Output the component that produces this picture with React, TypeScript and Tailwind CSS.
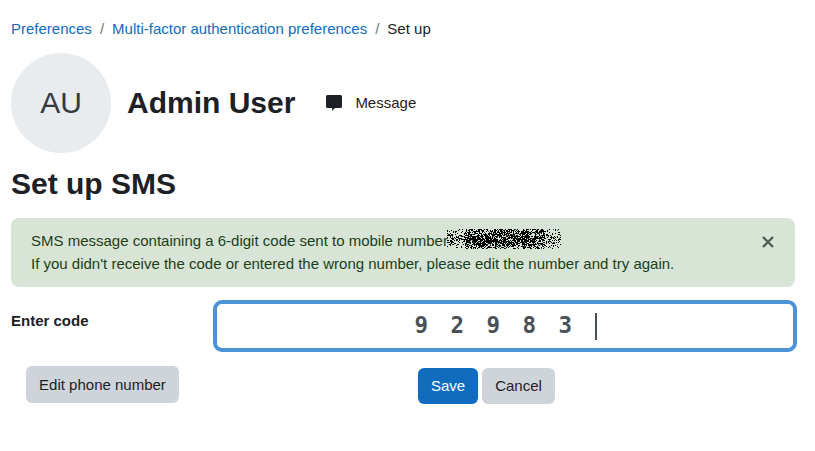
import React from 'react';

// Scribble that hides the phone number: dense speckle, black in the middle, loose at the ends
function Scribble() {
  const dots: { x: number; y: number; c: string }[] = [];
  let seed = 7;
  const rand = () => {
    seed = (seed * 16807) % 2147483647;
    return seed / 2147483647;
  };
  for (let i = 0; i < 2800; i++) {
    const x = rand() * 114;
    const mid = x > 18 && x < 98;
    const height = mid ? 21 : 15;
    const y = 9.500 + (rand() + rand() - 1) * height * 0.75;
    if (!mid && rand() > 0.3) continue;
    dots.push({ x: Math.floor(x), y: Math.floor(y), c: rand() > 0.93 ? '#2f5f5a' : '#000' });
  }
  return (
    <svg width="114" height="20" viewBox="0 0 114 20" className="absolute left-[416px] top-[-1px]" shapeRendering="crispEdges">
      {dots.map((d, i) => (
        <rect key={i} x={d.x} y={d.y} width="1" height="1" fill={d.c} />
      ))}
    </svg>
  );
}

export default function App() {
  return (
    <div className="w-[815px] h-[451px] overflow-hidden bg-white text-[#1d2125] text-[15px] font-['Liberation_Sans',sans-serif]">
      <div className="flex flex-col pl-[11px] pr-[20px]">
        {/* Breadcrumb */}
        <nav className="flex items-center gap-[8px] pt-[17px] h-[40px] leading-[22px]">
          <a className="text-[#0f6cbf]">Preferences</a>
          <span className="text-[#6a737b]">/</span>
          <a className="text-[#0f6cbf]">Multi-factor authentication preferences</a>
          <span className="text-[#6a737b]">/</span>
          <span>Set up</span>
        </nav>

        {/* Profile header */}
        <div className="flex items-center mt-[13px] h-[100px]">
          <div className="w-[100px] h-[100px] pb-[2px] rounded-full bg-[#e9ecef] flex items-center justify-center text-[30px] text-[#343a40]">AU</div>
          <h1 className="ml-[16px] text-[30px] font-bold leading-[36px]">Admin User</h1>
          <div className="flex items-center ml-[31px]">
            <svg width="16" height="16" viewBox="0 0 16 16" fill="#1d2125">
              <path d="M1.500 0h13A1.500 1.500 0 0 1 16 1.500v10a1.500 1.500 0 0 1-1.500 1.500H9l-2.800 3v-3H1.500A1.500 1.500 0 0 1 0 11.500v-10A1.500 1.500 0 0 1 1.500 0z" />
            </svg>
            <span className="ml-[13px] leading-[22px]">Message</span>
          </div>
        </div>

        <h2 className="mt-[13px] text-[30px] font-bold leading-[36px]">Set up SMS</h2>

        {/* Alert */}
        <div className="relative mt-[16px] h-[69px] rounded-[8px] bg-[#d7e4d6] text-[#1c3f1a] pl-[20px] pt-[12px] leading-[22.500px]">
          <div className="relative">
            SMS message containing a 6-digit code sent to mobile number
            <Scribble />
          </div>
          <div>If you didn't receive the code or entered the wrong number, please edit the number and try again.</div>
          <svg width="12" height="12" viewBox="0 0 12 12" className="absolute right-[21px] top-[18px]" stroke="#4f5f56" strokeWidth="2.400" strokeLinecap="butt">
            <path d="M1 1l10 10M11 1L1 11" />
          </svg>
        </div>

        {/* Code field */}
        <div className="flex mt-[13px]">
          <label className="w-[202px] shrink-0 pt-[10px] font-bold leading-[22px]">Enter code</label>
          <div className="w-[584px] shrink-0 h-[52px] rounded-[9px] border-[4px] border-[#4b93d6] bg-white flex items-center justify-center text-[#495057]">
            <span className="ml-[1px] font-['DejaVu_Sans_Mono',monospace] font-bold text-[22.500px] tracking-[22.500px] whitespace-nowrap">92983</span>
            <span className="w-[2px] h-[27px] bg-[#495057]" />
          </div>
        </div>

        {/* Actions */}
        <div className="flex mt-[14px]">
          <button className="ml-[15px] h-[37px] w-[153px] pt-[1px] rounded-[6px] bg-[#ced4da] text-[#1d2125]">Edit phone number</button>
          <div className="flex gap-[4px] ml-[239px] mt-[2px]">
            <button className="h-[36px] w-[60px] rounded-[6px] bg-[#0f6cbf] text-white">Save</button>
            <button className="h-[36px] w-[73px] rounded-[6px] bg-[#ced4da] text-[#1d2125]">Cancel</button>
          </div>
        </div>
      </div>
    </div>
  );
}
